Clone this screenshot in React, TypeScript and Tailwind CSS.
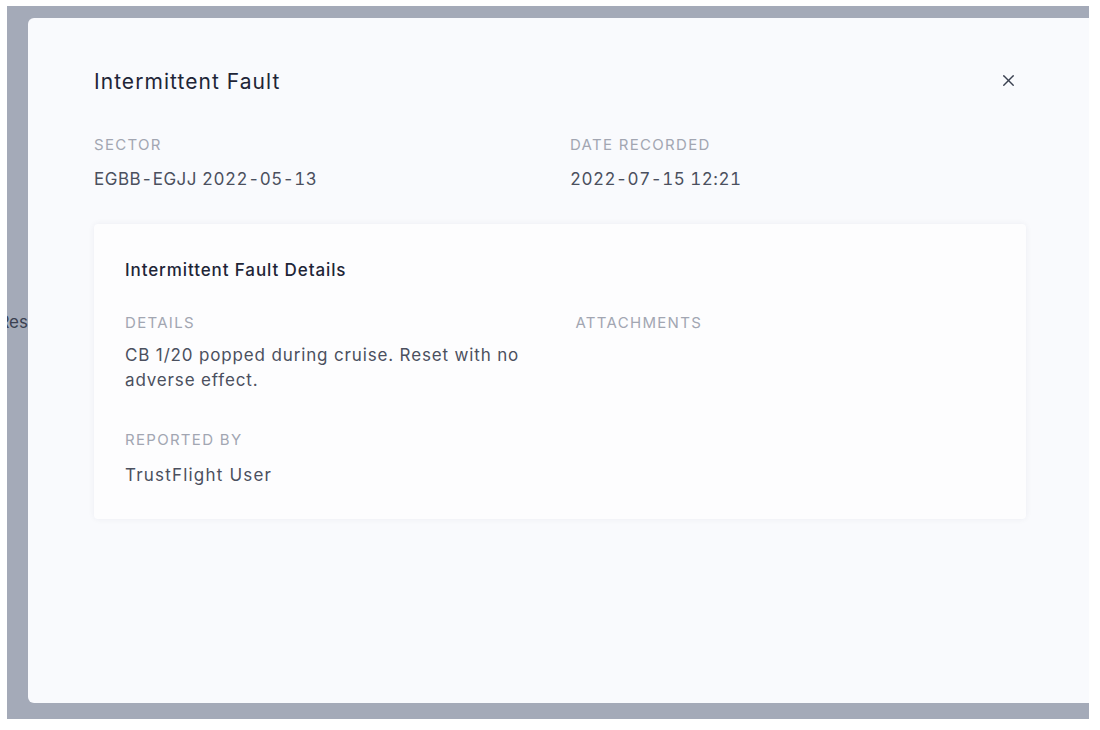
import { X } from "lucide-react";

function Label({ children }: { children: string }) {
  return <div className="text-[15px] leading-5 uppercase tracking-[1.3px] text-[#a2a6b2]">{children}</div>;
}

function Field({ label, value }: { label: string; value: string }) {
  return (
    <div>
      <Label>{label}</Label>
      <div className="mt-3 text-[17px] leading-6 tabular-nums tracking-[0.5px] text-[#4b505e]">{value}</div>
    </div>
  );
}

export default function App() {
  return (
    <div
      className="h-[730px] w-[1100px] bg-white pl-[7px] pt-[6px]"
      style={{ fontFamily: "Inter, 'Noto Sans', sans-serif" }}
    >
      <div className="flex h-[713px] w-[1082px] bg-[#a4aab8] pt-3 pb-4">
        <div className="flex w-[21px] shrink-0 justify-end overflow-hidden pt-[292px]">
          <span className="whitespace-nowrap text-[17px] leading-6 text-[#3b4151]">Res</span>
        </div>

        <div className="flex-1 rounded-l-md bg-[#f9fafd] pt-[50px] pl-[66px] pr-[63px]">
          <div className="flex items-center justify-between">
            <h1 className="text-[21px] leading-7 tracking-[1.05px] text-[#1e2537]">Intermittent Fault</h1>
            <button className="mr-[8px] -mt-[3px] text-[#3a4050]">
              <X size={19} strokeWidth={1.7} />
            </button>
          </div>

          <div className="mt-[39px] grid grid-cols-2 gap-5">
            <Field label="Sector" value="EGBB-EGJJ 2022-05-13" />
            <Field label="Date Recorded" value="2022-07-15 12:21" />
          </div>

          <div className="mt-[33px] rounded bg-[#fdfdfe] pl-[31px] pr-8 pt-[34px] pb-8 shadow-[0_0_6px_rgba(30,40,70,0.06)]">
            <h2 className="text-[17px] font-medium leading-6 tracking-[0.9px] text-[#1e2537]">
              Intermittent Fault Details
            </h2>
            <div className="mt-[31px] grid grid-cols-2 gap-8">
              <div>
                <Label>Details</Label>
                <p className="mt-[10px] text-[17px] leading-[25px] tracking-[0.85px] text-[#4b505e]">
                  CB 1/20 popped during cruise. Reset with no adverse effect.
                </p>
                <div className="mt-[37px]">
                  <Label>Reported By</Label>
                  <div className="mt-[13px] text-[17px] leading-6 tracking-[1.2px] text-[#4b505e]">TrustFlight User</div>
                </div>
              </div>
              <div>
                <Label>Attachments</Label>
              </div>
            </div>
          </div>
        </div>
      </div>
    </div>
  );
}
